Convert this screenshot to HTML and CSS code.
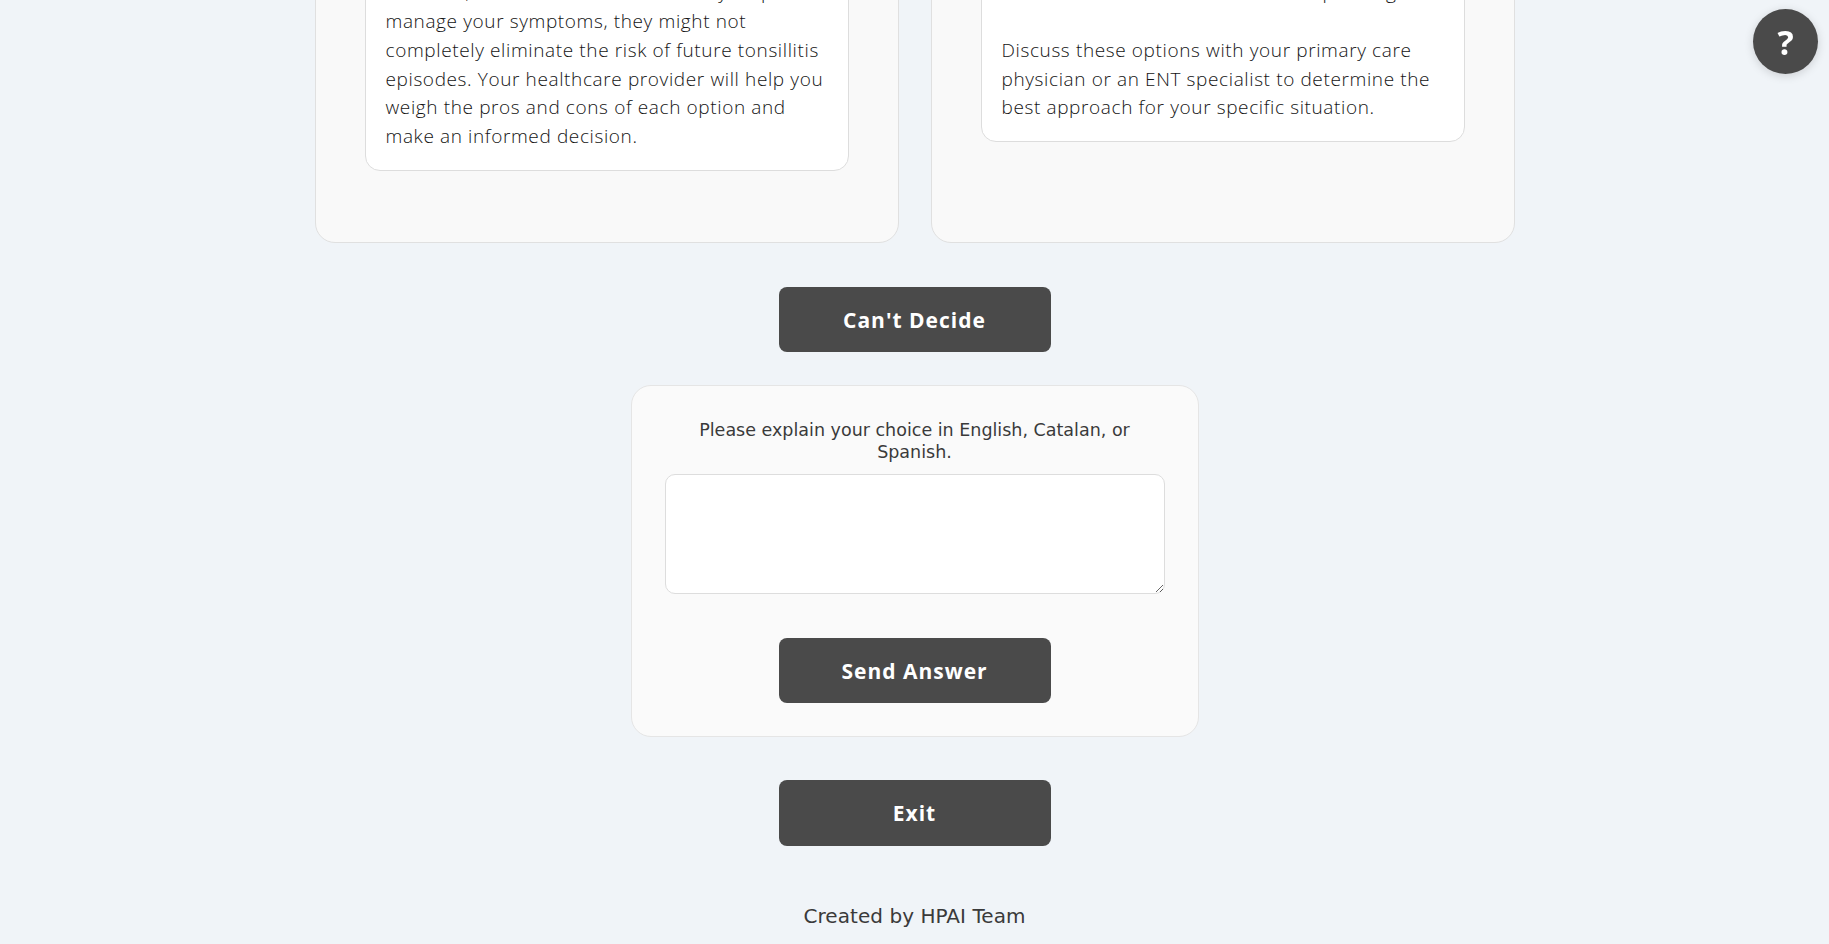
FILE: index.html
```html
<!DOCTYPE html>
<html lang="en">
<head>
<meta charset="utf-8">
<title>Answer</title>
<link rel="stylesheet" href="styles.css">
</head>
<body>
<main class="page">
  <section class="options">
    <article class="option">
      <div class="answer answer-left">
        <p>However, while these treatments may help manage your symptoms, they might not completely eliminate the risk of future tonsillitis episodes. Your healthcare provider will help you weigh the pros and cons of each option and make an informed decision.</p>
      </div>
    </article>
    <article class="option">
      <div class="answer answer-right">
        <p>Each of these treatments differs depending.</p>
        <p class="gap">Discuss these options with your primary care physician or an ENT specialist to determine the best approach for your specific situation.</p>
      </div>
    </article>
  </section>
  <button class="action cant" type="button">Can't Decide</button>
  <form class="explain">
    <label class="explain-label" for="why">Please explain your choice in English, Catalan, or Spanish.</label>
    <textarea class="explain-input" id="why"></textarea>
    <button class="action send" type="button">Send Answer</button>
  </form>
  <button class="action exit" type="button">Exit</button>
  <footer class="credit">Created by HPAI Team</footer>
</main>
<button class="help" type="button">?</button>
</body>
</html>
```
FILE: styles.css
```css
* { box-sizing: border-box; }
html, body { margin: 0; height: 100%; overflow: hidden; }
body { background: #f0f4f8; color: #333; font-family: "DejaVu Sans", sans-serif; }
.page { height: 944px; display: flex; flex-direction: column; justify-content: flex-end; align-items: center; }
.options { display: flex; gap: 32px; width: 1200px; flex-shrink: 0; align-items: stretch; }
.option { flex: 1; background: #f9f9f9; border: 1px solid #e0e0e0; border-radius: 20px; padding: 0 49px 71px; }
.answer { background: #fff; border: 1px solid #ddd; border-radius: 15px; padding: 0 20px 19px; font-family: "Open Sans", sans-serif; font-weight: 300; font-size: 19px; letter-spacing: 0.62px; line-height: 28.8px; color: #141414; }
.answer p { margin: 0; }
.answer .gap { margin-top: 28.8px; }
.action { display: block; flex-shrink: 0; width: 272px; height: 65px; border: 0; border-radius: 8px; background: #4a4a4a; color: #fff; font-family: "Open Sans", sans-serif; font-weight: 700; font-size: 21px; letter-spacing: 1px; }
.cant { margin-top: 44px; }
.explain { width: 568px; flex-shrink: 0; margin-top: 33px; padding: 33px 33px 33px; background: #fafafa; border: 1px solid #e5e5e5; border-radius: 20px; display: flex; flex-direction: column; align-items: center; }
.explain-label { font-size: 17.5px; line-height: 22px; text-align: center; color: #3a3a3a; }
.explain-input { display: block; width: 500px; height: 120px; margin-top: 11px; background: #fff; border: 1px solid #ddd; border-radius: 10px; }
.send { margin-top: 44px; }
.exit { margin-top: 43px; height: 66px; }
.credit { margin: 58px 0 16px; font-size: 20px; letter-spacing: 0.05px; line-height: 24px; color: #3a3a3a; }
.help { position: fixed; top: 9px; right: 11px; width: 65px; height: 65px; border: 0; border-radius: 50%; background: #4a4a4a; color: #fff; font-family: "Open Sans", sans-serif; font-weight: 700; font-size: 34px; box-shadow: 0 2px 10px rgba(0,0,0,.15); }
```
